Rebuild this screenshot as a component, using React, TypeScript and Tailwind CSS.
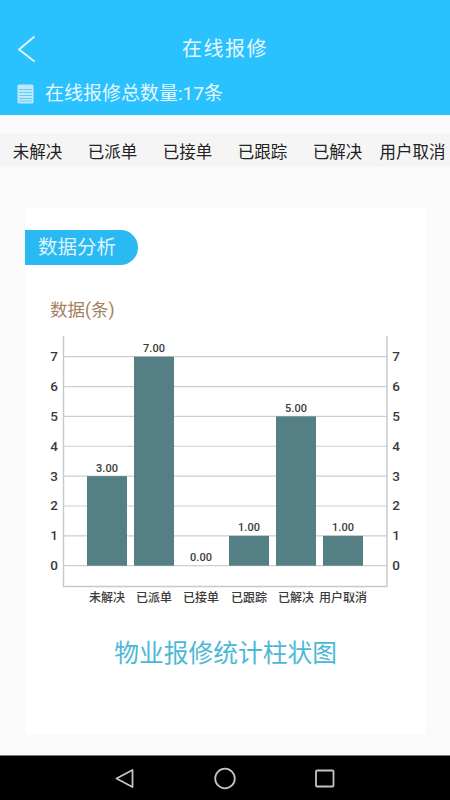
const FONT = "font-['Roboto','Noto_Sans_CJK_SC',sans-serif]";

const tabs = ["未解决", "已派单", "已接单", "已跟踪", "已解决", "用户取消"];

const bars = [
  { label: "未解决", value: 3, x: 87 },
  { label: "已派单", value: 7, x: 134 },
  { label: "已接单", value: 0, x: 181 },
  { label: "已跟踪", value: 1, x: 229 },
  { label: "已解决", value: 5, x: 276 },
  { label: "用户取消", value: 1, x: 323 },
];

const ticks = [0, 1, 2, 3, 4, 5, 6, 7];

// chart svg starts at page (25, 330)
function BarChart() {
  const y0 = 235.7;
  const step = 29.86;
  return (
    <svg width="400" height="285" viewBox="0 0 400 285" className="block">
      <path d="M38.5 6V256.5H362V6" fill="none" stroke="#c8c8c8" strokeWidth="1.4" />
      {ticks.map((t) => (
        <g key={t}>
          <line x1="38.5" x2="362" y1={y0 - t * step} y2={y0 - t * step} stroke="#cdcdcd" strokeWidth="1.2" />
          <text x="29" y={y0 - t * step + 4.5} textAnchor="middle" fontSize="13.5" fontWeight="500" fill="#3a3a3a">{t}</text>
          <text x="371" y={y0 - t * step + 4.5} textAnchor="middle" fontSize="13.5" fontWeight="500" fill="#3a3a3a">{t}</text>
        </g>
      ))}
      {bars.map((b) => (
        <g key={b.label}>
          {b.value > 0 && (
            <rect x={b.x - 25} y={y0 - b.value * step} width="40" height={b.value * step} fill="#537f85" />
          )}
          <text x={b.x - 5} y={y0 - b.value * step - 4.5} textAnchor="middle" fontSize="11" fontWeight="500" fill="#3a3a3a">
            {b.value.toFixed(2)}
          </text>
          <text x={b.x - 5} y="271.5" textAnchor="middle" fontSize="12" fontWeight="500" fill="#3a3a3a">{b.label}</text>
        </g>
      ))}
    </svg>
  );
}

export default function App() {
  return (
    <div className={`flex h-[800px] w-[450px] flex-col overflow-hidden bg-[#fafafa] ${FONT}`}>
      <header className="h-[115px] bg-[#29c1fe] text-[#e6f7fe]">
        <div className="relative flex h-[80px] items-end justify-center pb-[16px]">
          <svg width="20" height="28" viewBox="0 0 20 28" className="absolute left-[17px] top-[35px]">
            <path d="M17.5 1.5L2 14.5L17.5 26.5" fill="none" stroke="#e6f7fe" strokeWidth="1.8" />
          </svg>
          <span className="text-[20px] leading-[30px] tracking-[1.5px]">在线报修</span>
        </div>
        <div className="flex items-center pl-[17px]">
          <svg width="17" height="20" viewBox="0 0 17 20" className="mr-[11px]">
            <rect x="0.5" y="0.5" width="16" height="19" rx="1.5" fill="#bfe9fa" />
            <path d="M2 5.5H15M2 8.5H15M2 11.5H15M2 14.5H15M2 17H15" stroke="#5fcdf9" strokeWidth="1" />
          </svg>
          <span className="text-[19px] leading-[28px]">在线报修总数量:17条</span>
        </div>
      </header>

      <nav className="mt-[18px] grid h-[34px] grid-cols-6 items-center bg-[#f5f5f5]">
        {tabs.map((t) => (
          <span key={t} className="pt-[3px] text-center text-[16.5px] leading-[34px] whitespace-nowrap text-[#222]">
            {t}
          </span>
        ))}
      </nav>

      <main className="mx-[25px] mt-[41px] h-[527px] w-[401px] bg-white pt-[22px]">
        <div className="flex h-[35px] w-[113px] items-center rounded-r-full bg-[#2bb9f4] pl-[13px] text-[19.5px] text-[#dff5fd]">
          数据分析
        </div>
        <div className="mt-[33px] pl-[25px] text-[17.5px] leading-[24px] text-[#a5805f]">数据(条)</div>
        <div className="mt-[8px]">
          <BarChart />
        </div>
        <div className="mt-[21px] text-center text-[24.75px] leading-[36px] text-[#4db8d6]">物业报修统计柱状图</div>
      </main>

      <footer className="mt-[20px] flex h-[45px] flex-1 items-center border-t border-[#777] bg-black">
        <svg width="450" height="44" viewBox="0 0 450 44" fill="none" stroke="#c4c4c4" strokeWidth="1.8">
          <path d="M116.5 22.5L132.5 14V31Z" strokeLinejoin="round" />
          <circle cx="225" cy="22.5" r="9.8" />
          <rect x="316" y="14.5" width="17.5" height="16" rx="1" />
        </svg>
      </footer>
    </div>
  );
}
